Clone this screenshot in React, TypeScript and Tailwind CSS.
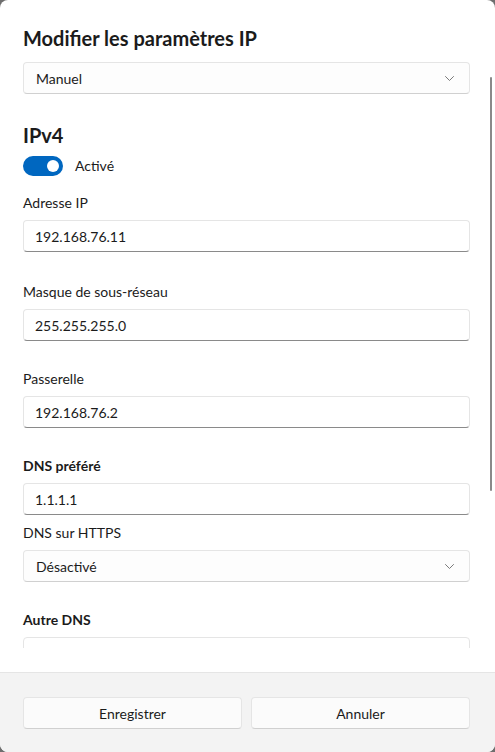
const font = { fontFamily: 'Lato, "Noto Sans", sans-serif' };

// Thin Fluent chevron used by the combo boxes
function Chevron() {
  return (
    <svg width="9" height="5" viewBox="0 0 9 5" fill="none" className="text-[#6b6b6b]">
      <path d="M0.5 0.5 L4.5 4.5 L8.5 0.5" stroke="currentColor" strokeWidth="0.9" strokeLinecap="round" strokeLinejoin="round" />
    </svg>
  );
}

// Text box with the Fluent-style darker bottom edge
function Field({ value, cut }: { value?: string; cut?: boolean }) {
  return (
    <div
      className={`flex h-[32px] w-full items-center rounded-[4px] border border-[#e5e5e5] bg-white px-[11px] text-[14px] text-[#1b1b1b] ${
        cut ? '' : 'border-b-[#8a8a8a]'
      }`}
    >
      {value}
    </div>
  );
}

function Select({ value }: { value: string }) {
  return (
    <div className="flex h-[32px] w-full items-center justify-between rounded-[4px] border border-[#e5e5e5] border-b-[#d0d0d0] bg-[#fdfdfd] pl-[12px] pr-[15px] text-[14px] text-[#1b1b1b]">
      <span>{value}</span>
      <Chevron />
    </div>
  );
}

function Label({ children, bold }: { children: string; bold?: boolean }) {
  return (
    <div className={`text-[14px] leading-[20px] text-[#1b1b1b] ${bold ? 'font-bold' : ''}`}>{children}</div>
  );
}

export default function App() {
  return (
    <div className="h-[752px] w-[495px] bg-[#6e6e6e]" style={font}>
      <div className="relative flex h-full w-full flex-col overflow-hidden rounded-[8px] bg-white">
        {/* scrollable body */}
        <div className="relative min-h-0 flex-1 pb-[24px]">
          <div className="h-full overflow-hidden pl-[23px] pr-[25px] pt-[24px]">
            <h1 className="text-[20px] font-bold leading-[28px] text-[#1b1b1b]">Modifier les paramètres IP</h1>
            <div className="mt-[10px]">
              <Select value="Manuel" />
            </div>

            <h2 className="mt-[28px] text-[20px] font-bold leading-[26px] text-[#1b1b1b]">IPv4</h2>
            <div className="mt-[7px] flex items-center gap-[12px]">
              <div className="flex h-[20px] w-[40px] items-center justify-end rounded-full bg-[#0067c0] pr-[4px]">
                <div className="h-[12px] w-[12px] rounded-full bg-white" />
              </div>
              <span className="text-[14px] text-[#1b1b1b]">Activé</span>
            </div>

            <div className="mt-[17px]">
              <Label>Adresse IP</Label>
              <div className="mt-[7px]">
                <Field value="192.168.76.11" />
              </div>
            </div>
            <div className="mt-[30px]">
              <Label>Masque de sous-réseau</Label>
              <div className="mt-[7px]">
                <Field value="255.255.255.0" />
              </div>
            </div>
            <div className="mt-[28px]">
              <Label>Passerelle</Label>
              <div className="mt-[7px]">
                <Field value="192.168.76.2" />
              </div>
            </div>
            <div className="mt-[28px]">
              <Label bold>DNS préféré</Label>
              <div className="mt-[7px]">
                <Field value="1.1.1.1" />
              </div>
            </div>
            <div className="mt-[8px]">
              <Label>DNS sur HTTPS</Label>
              <div className="mt-[7px]">
                <Select value="Désactivé" />
              </div>
            </div>
            <div className="mt-[28px]">
              <Label bold>Autre DNS</Label>
              <div className="mt-[7px]">
                <Field cut />
              </div>
            </div>
          </div>
          <div className="absolute right-[3px] top-[77px] h-[414px] w-[2px] rounded-full bg-[#8a8a8a]" />
        </div>

        {/* footer buttons */}
        <div className="flex h-[80px] shrink-0 gap-[9px] border-t border-[#e5e5e5] bg-[#f3f3f3] pl-[23px] pr-[25px] pt-[24px]">
          <button className="h-[32px] flex-1 rounded-[4px] border border-[#e5e5e5] border-b-[#d0d0d0] bg-[#fbfbfb] text-[14px] text-[#1b1b1b]">
            Enregistrer
          </button>
          <button className="h-[32px] flex-1 rounded-[4px] border border-[#e5e5e5] border-b-[#d0d0d0] bg-[#fbfbfb] text-[14px] text-[#1b1b1b]">
            Annuler
          </button>
        </div>
      </div>
    </div>
  );
}
